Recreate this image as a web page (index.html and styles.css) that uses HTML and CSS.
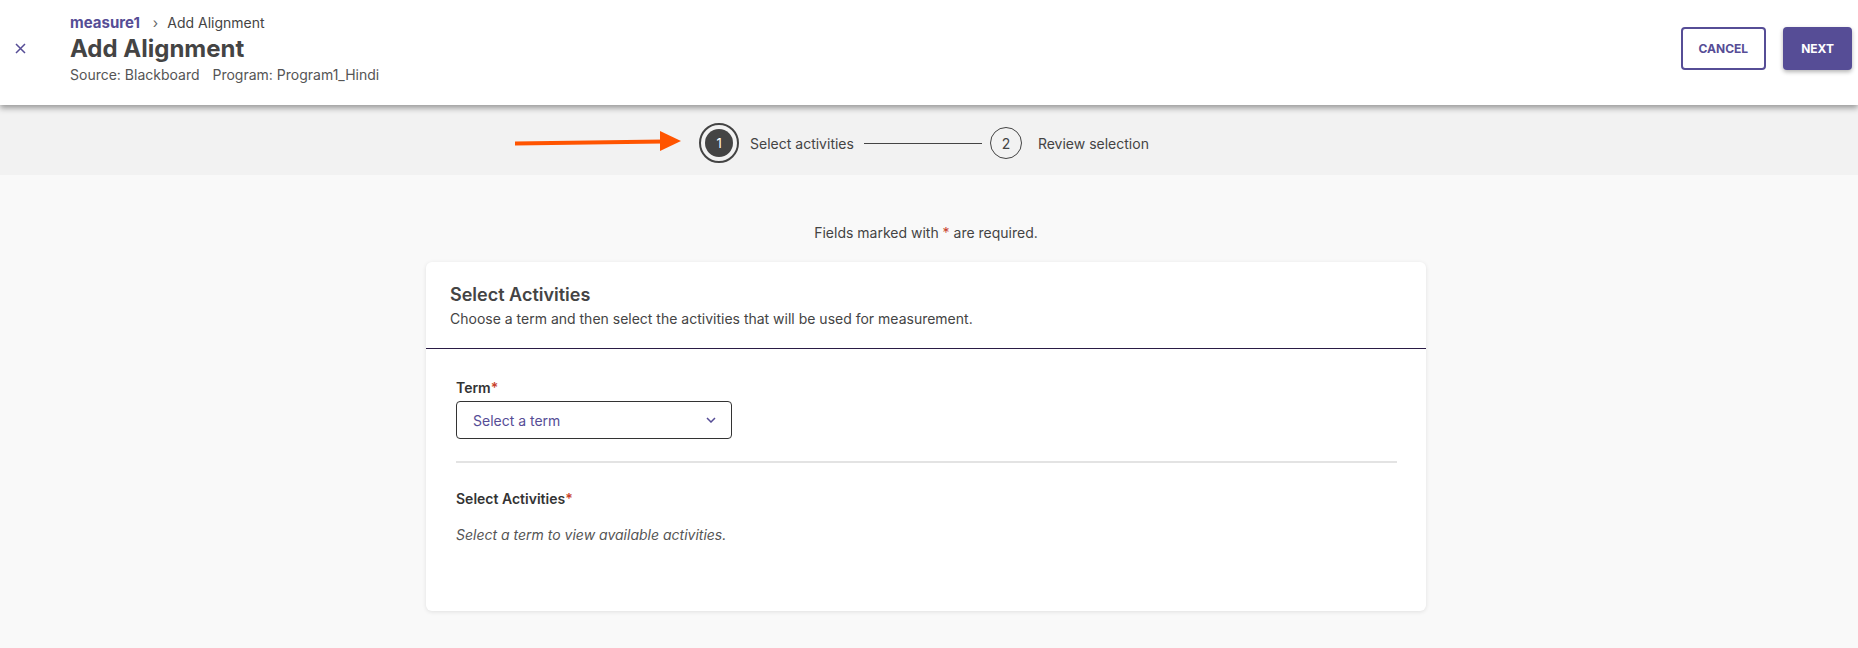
FILE: index.html
```html
<!DOCTYPE html>
<html lang="en">
<head>
    <meta charset="UTF-8">
    <meta name="viewport" content="width=device-width, initial-scale=1.0">
    <title>Add Alignment</title>
    <link rel="stylesheet" href="styles.css">
</head>
<body>
    <header class="page-header">
        <button class="close-btn" aria-label="Close">
            <svg width="11" height="11" viewBox="0 0 11 11"><path d="M1 1L10 10M10 1L1 10" stroke="#564d96" stroke-width="1.5" fill="none"/></svg>
        </button>
        <div class="title-block">
            <div class="breadcrumb">
                <a href="#" class="crumb-link">measure1</a>
                <span class="crumb-sep">&rsaquo;</span>
                <span class="crumb-current">Add Alignment</span>
            </div>
            <h1 class="page-title">Add Alignment</h1>
            <div class="meta">
                <span>Source: Blackboard</span>
                <span>Program: Program1_Hindi</span>
            </div>
        </div>
        <div class="header-actions">
            <button class="btn btn-outline">Cancel</button>
            <button class="btn btn-primary">Next</button>
        </div>
    </header>

    <div class="stepper-band">
        <div class="stepper">
            <!-- annotation arrow from the screenshot -->
            <svg class="annotation-arrow" width="166" height="22" viewBox="0 0 166 22">
                <path d="M0 13.5L148 11.5" stroke="#ff5400" stroke-width="4" fill="none"/>
                <path d="M145 1L166 11L145 21Z" fill="#ff5400"/>
            </svg>
            <div class="step active">
                <span class="step-ring"><span class="step-num">1</span></span>
                <span class="step-label">Select activities</span>
            </div>
            <span class="step-line"></span>
            <div class="step">
                <span class="step-ring"><span class="step-num">2</span></span>
                <span class="step-label">Review selection</span>
            </div>
        </div>
    </div>

    <main class="main">
        <p class="required-note">Fields marked with <span class="req">*</span> are required.</p>

        <section class="card">
            <div class="card-header">
                <h2 class="card-title">Select Activities</h2>
                <p class="card-desc">Choose a term and then select the activities that will be used for measurement.</p>
            </div>
            <div class="card-body">
                <label class="field-label">Term<span class="req">*</span></label>
                <div class="select-box">
                    <span>Select a term</span>
                    <svg width="10" height="6" viewBox="0 0 10 6"><path d="M1 1L5 5L9 1" stroke="#564d96" stroke-width="1.5" fill="none"/></svg>
                </div>
                <hr class="divider">
                <div class="field-label">Select Activities<span class="req">*</span></div>
                <p class="empty-note">Select a term to view available activities.</p>
            </div>
        </section>
    </main>
</body>
</html>
```

FILE: styles.css
```css
body { margin: 0; font-family: Inter, "Liberation Sans", sans-serif; color: #444; background: #f9f9f9; }
button { font-family: inherit; }

.page-header { position: relative; z-index: 2; display: flex; align-items: flex-start; height: 105px; box-sizing: border-box; padding: 13px 6px 0 0; background: white; box-shadow: 0 3px 6px rgba(0,0,0,0.38); }
.close-btn { width: 70px; height: 70px; padding: 0 30px 0 0; border: none; background: none; cursor: pointer; display: flex; justify-content: center; align-items: center; }
.title-block { flex: 1; }
.breadcrumb { display: flex; align-items: baseline; line-height: 20px; }
.crumb-link { font-size: 15px; font-weight: 700; color: #564d96; text-decoration: none; }
.crumb-sep { margin: 0 9px 0 13px; font-size: 14px; color: #666; }
.crumb-current { font-size: 14px; color: #444; }
.page-title { margin: 1px 0 0; font-size: 24px; line-height: 30px; font-weight: 700; color: #444; }
.meta { margin-top: 1px; font-size: 14px; line-height: 20px; color: #555; display: flex; gap: 13px; }
.header-actions { display: flex; gap: 17px; margin-top: 14px; }
.btn { height: 43px; border-radius: 4px; font-size: 12px; font-weight: 700; text-transform: uppercase; cursor: pointer; }
.btn-outline { padding: 0 16px; border: 2px solid #564d96; background: white; color: #564d96; }
.btn-primary { padding: 0 18px; border: none; background: #564d96; color: white; box-shadow: 0 2px 4px rgba(0,0,0,0.3); }

.stepper-band { height: 70px; background: #f2f2f2; display: flex; justify-content: center; align-items: center; padding: 6px 10px 0 0; box-sizing: border-box; }
.stepper { position: relative; display: flex; align-items: center; }
.annotation-arrow { position: absolute; right: calc(100% + 18px); top: 7px; }
.step { display: flex; align-items: center; gap: 11px; }
.step-ring { width: 40px; height: 40px; display: flex; justify-content: center; align-items: center; }
.step-num { width: 32px; height: 32px; box-sizing: border-box; border: 1px solid #444; border-radius: 50%; display: flex; justify-content: center; align-items: center; font-size: 14px; color: #444; }
.step.active .step-ring { box-sizing: border-box; border: 2px solid #444; border-radius: 50%; }
.step.active .step-num { width: 28px; height: 28px; background: #444; border: none; color: white; font-size: 13px; }
.step-label { font-size: 14px; color: #444; }
.step-line { width: 118px; height: 1px; background: #444; margin: 0 4px 0 10px; }
.step:last-child { gap: 12px; }

.main { padding: 48px 6px 40px 0; }
.required-note { margin: 0; text-align: center; font-size: 14px; line-height: 20px; color: #444; }
.req { color: #c8412b; }

.card { width: 1000px; margin: 19px auto 0; background: white; border-radius: 6px; box-shadow: 0 1px 4px rgba(0,0,0,0.1); }
.card-header { padding: 21px 24px 19px; border-bottom: 1px solid #2a1b45; }
.card-title { margin: 0; font-size: 18px; line-height: 24px; font-weight: 600; color: #444; }
.card-desc { margin: 2px 0 0; font-size: 14px; line-height: 20px; color: #444; }
.card-body { padding: 29px 29px 66px 30px; }
.field-label { display: block; font-size: 14px; line-height: 20px; font-weight: 600; color: #333; }
.select-box { width: 276px; height: 38px; margin-top: 3px; box-sizing: border-box; border: 1px solid #333; border-radius: 4px; padding: 0 15px 0 16px; display: flex; justify-content: space-between; align-items: center; font-size: 14px; color: #564d96; }
.divider { margin: 22px 0 26px; border: none; height: 2px; background: #e3e3e3; }
.empty-note { margin: 16px 0 0; font-size: 14px; line-height: 20px; font-style: italic; color: #555; }
```
